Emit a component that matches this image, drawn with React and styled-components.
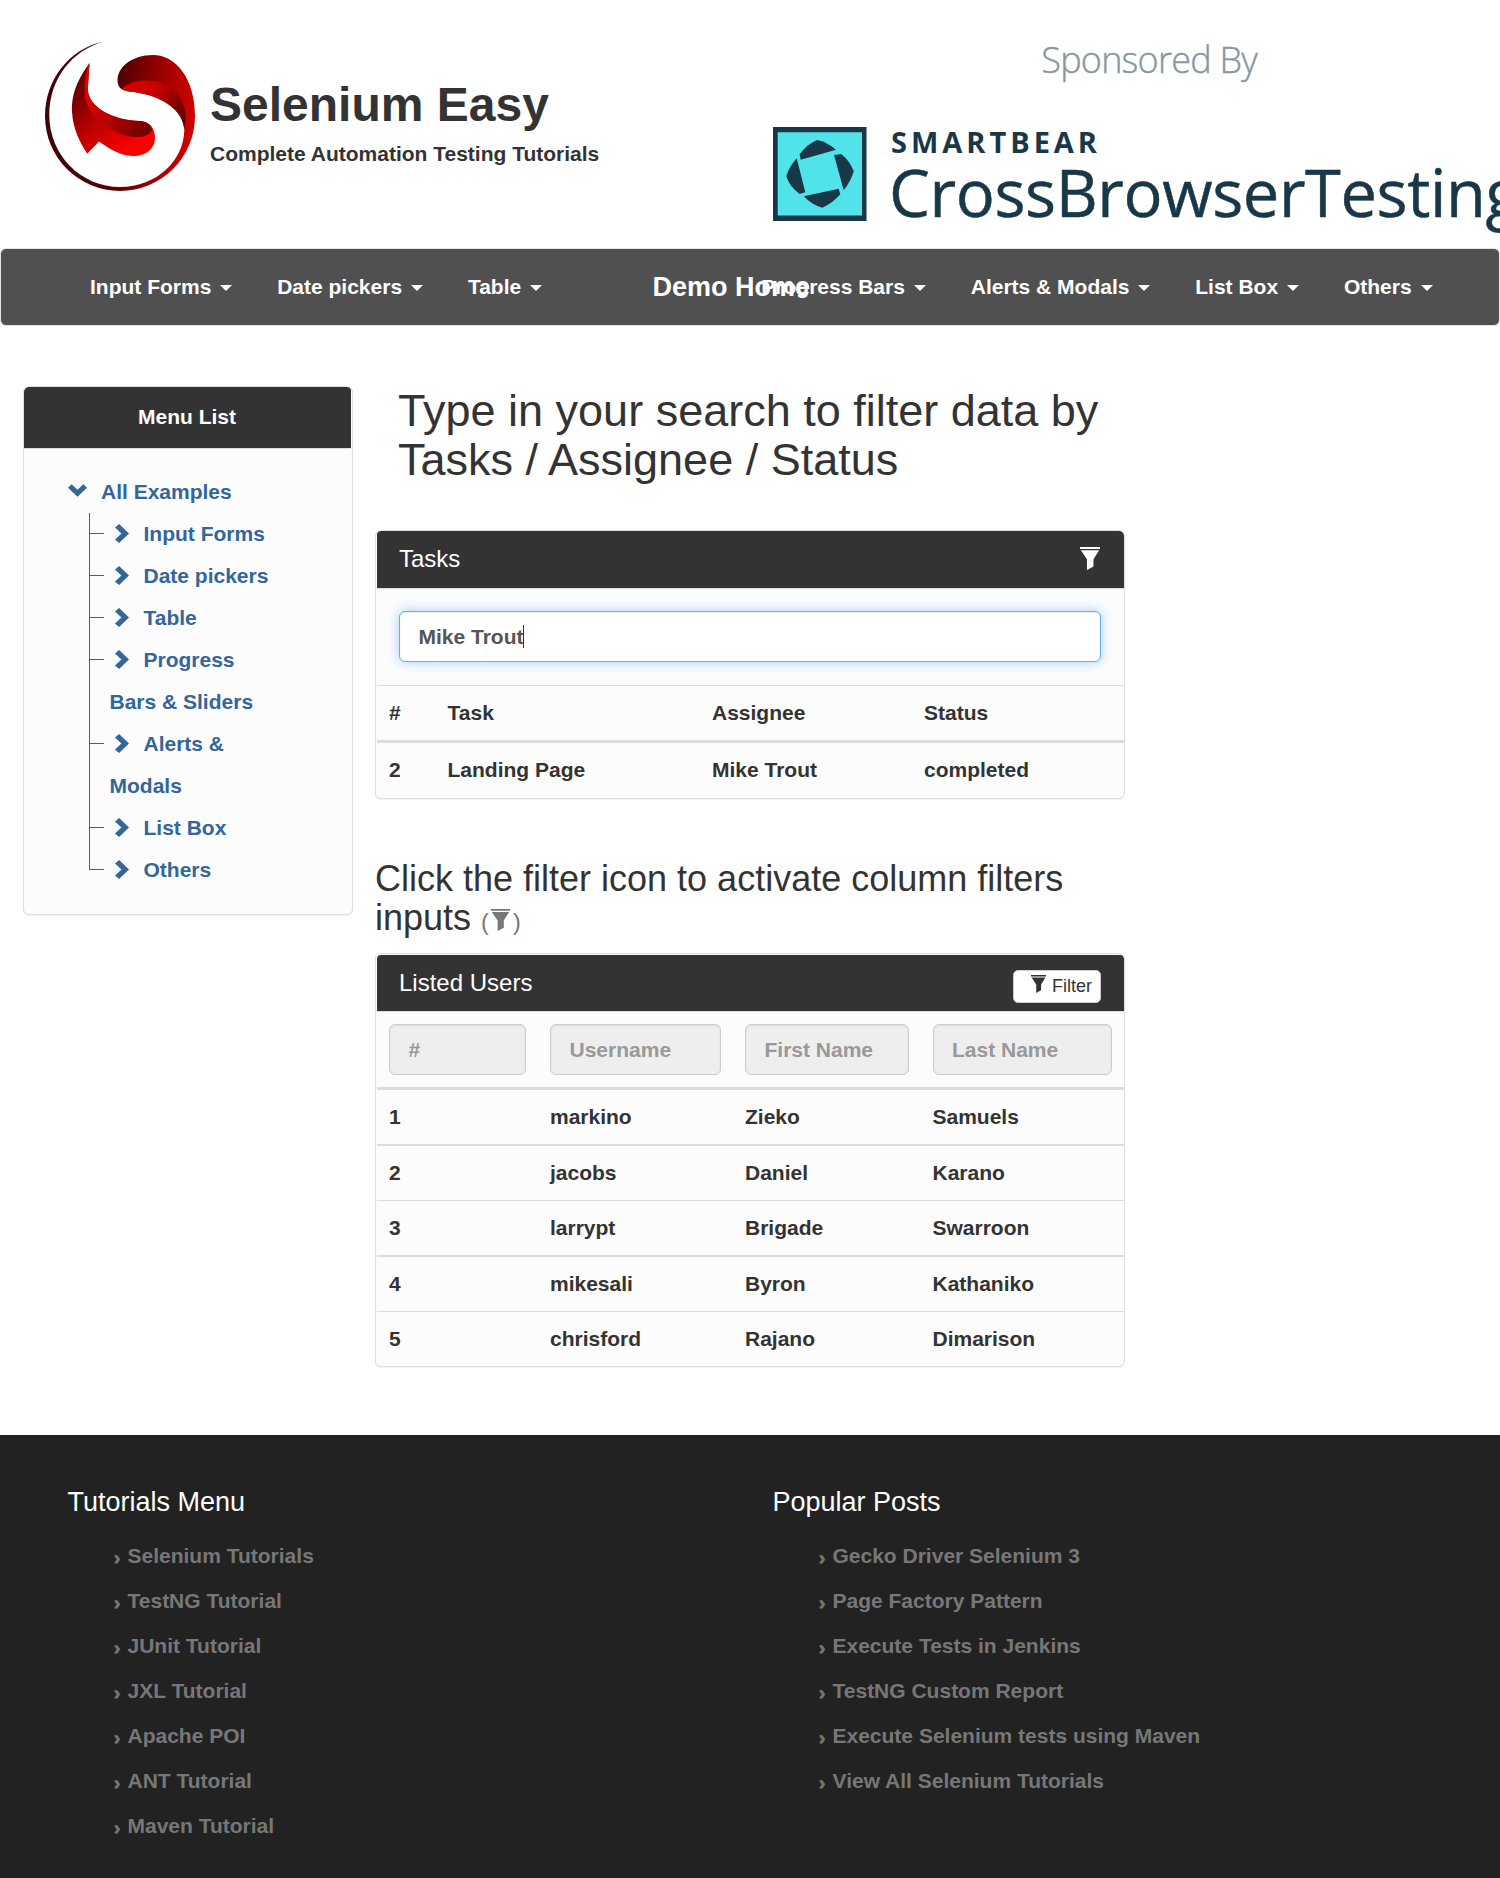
import React from "react";
import styled, { createGlobalStyle } from "styled-components";

const GlobalStyle = createGlobalStyle`
  *, *::before, *::after { box-sizing: border-box; }
  html { background: #fff; }
  body {
    margin: 0;
    overflow-x: hidden;
    background: #fff;
    color: #333;
    font: bold 21px/30px "Liberation Sans", Arial, Helvetica, sans-serif;
  }
  h1, h2, h3, p, ul { margin: 0; padding: 0; }
  ul { list-style: none; }
  a { color: inherit; text-decoration: none; }
`;

const Page = styled.div`
  width: 1500px;
  height: 1878px;
  overflow: hidden;
  display: flex;
  flex-direction: column;
`;

/* ---------- header ---------- */

const Header = styled.header`
  display: flex;
  flex: none;
  height: 248px;
`;

const Brand = styled.a`
  display: flex;
  align-items: flex-start;
  width: 773px;
  padding: 41px 0 0 45px;
`;

const BrandText = styled.div`
  padding: 37px 0 0 15px;
`;

const BrandName = styled.h1`
  font-size: 48px;
  line-height: 53px;
`;

const Tagline = styled.p`
  margin-top: 8px;
`;

const LogoSvg = styled.svg`
  display: block;
  flex: none;
  width: 150px;
  height: 150px;
`;

const SponsorSvg = styled.svg`
  display: block;
  flex: none;
  width: 727px;
  height: 248px;
  font-family: "Open Sans", "Noto Sans", sans-serif;
`;

function Logo() {
  return (
    <LogoSvg viewBox="0 0 150 150">
      <defs>
        <linearGradient id="ring" gradientUnits="userSpaceOnUse" x1="0" y1="60" x2="150" y2="75">
          <stop offset="0" stopColor="#3c080a" />
          <stop offset=".5" stopColor="#570003" />
          <stop offset=".85" stopColor="#b40000" />
          <stop offset="1" stopColor="#d20000" />
        </linearGradient>
        <linearGradient id="upperFold" gradientUnits="userSpaceOnUse" x1="85" y1="40" x2="142" y2="72">
          <stop offset="0" stopColor="#d80000" />
          <stop offset=".45" stopColor="#c40000" />
          <stop offset="1" stopColor="#5c0000" />
        </linearGradient>
        <linearGradient id="wing" gradientUnits="userSpaceOnUse" x1="30" y1="50" x2="84" y2="108">
          <stop offset="0" stopColor="#6a0000" />
          <stop offset=".5" stopColor="#c00000" />
          <stop offset="1" stopColor="#fa0000" />
        </linearGradient>
        <linearGradient id="lowerFold" gradientUnits="userSpaceOnUse" x1="42" y1="60" x2="106" y2="90">
          <stop offset="0" stopColor="#e00000" />
          <stop offset=".4" stopColor="#b40000" />
          <stop offset="1" stopColor="#680000" />
        </linearGradient>
      </defs>
      <path
        fill="url(#ring)"
        d="M59 .4C25 7 0 38 0 75a75 75 0 0 0 150 0C150 38 131 14 108 14C86 14 72.5 27 72.5 39C72.5 46 76 49.5 84 50.5C112 53 139 66 139.3 89C139 119 112 146 75 146C36 146 4.3 114 4.3 74C4.3 38 27 9 59 .4Z"
      />
      <path
        fill="url(#upperFold)"
        d="M77 47.5C88 38 106 38 117 42C136 49 144 68 139.2 88C137 66 112 53 84 50.5C81 50 79 49 77 47.5Z"
      />
      <path
        fill="url(#wing)"
        d="M44.5 22C30 42 26.5 56 27 71C28 88 35 102 42.3 112.7L54 100.5C62 106 74 115 88 115C102 115 110 107 110 97C110 86 104 80.5 95 80C70 80 40 66 43 45Z"
      />
      <path
        fill="url(#lowerFold)"
        d="M44.5 22C38 36 38 56 44 68C54 84 72 95 90 96C98 96.5 105 94 107 89C105 83 101 80.3 95 80C70 80 40 66 43 45Z"
      />
    </LogoSvg>
  );
}

function Sponsor() {
  return (
    <SponsorSvg viewBox="773 0 727 248">
      <text x="1041.3" y="73" fontSize="36" fontWeight="300" fill="#8896a3" stroke="#8896a3" strokeWidth=".4" textLength="216.4">
        Sponsored By
      </text>
      <path fill="#183747" d="M773 127H866.5V221H773Z" />
      <path fill="#50e3e9" d="M777.7 132.3H862V215.5H777.7Z" />
      <g fill="#183747">
        <path d="M799.7 154.3Q807 144 817.3 140Q827 142 836 149.7L800.7 159.7Z" />
        <path d="M834 155L841.3 154Q850 161 853.7 171.3Q851 181 843.7 190.3Z" />
        <path d="M803.7 196.3L838.7 188.7L840.3 194.3Q833 203 822.3 207.7Q812 205 803.7 196.3Z" />
        <path d="M796.7 158.3L805.3 192.3L799.7 194Q789 186 786.3 176Q789 167 796.7 158.3Z" />
      </g>
      <text x="891" y="153.3" fontSize="29" fontWeight="700" fill="#183747" textLength="206">
        SMARTBEAR
      </text>
      <text x="889" y="216.7" fontSize="65" fontWeight="400" fill="#183747" stroke="#183747" strokeWidth=".5" letterSpacing="-.38">
        CrossBrowserTesting
      </text>
    </SponsorSvg>
  );
}

/* ---------- navigation ---------- */

const Navbar = styled.nav`
  position: relative;
  flex: none;
  display: flex;
  align-items: center;
  justify-content: space-between;
  height: 78px;
  padding: 0 44px 1px 66.5px;
  border: 1px solid #e4e4e4;
  border-radius: 6px;
  background: #505050;
  color: #fff;
`;

const NavGroup = styled.div`
  display: flex;
`;

const NavLink = styled.a`
  padding: 0 22.5px;
  white-space: nowrap;
`;

const Caret = styled.b`
  display: inline-block;
  margin-left: 3px;
  vertical-align: middle;
  border-top: 6px solid;
  border-left: 6px solid transparent;
  border-right: 6px solid transparent;
`;

const NavBrand = styled.a`
  position: absolute;
  left: 651.5px;
  top: 23px;
  font-size: 27px;
  white-space: nowrap;
`;

const leftNav = ["Input Forms", "Date pickers", "Table"];
const rightNav = ["Progress Bars", "Alerts & Modals", "List Box", "Others"];

const renderNav = (labels) =>
  labels.map((label) => (
    <NavLink key={label}>
      {label} <Caret />
    </NavLink>
  ));

/* ---------- shared panel parts ---------- */

const Panel = styled.section`
  padding: ${(p) => p.$inset || 0}px 0 0 1px;
  border: 1px solid #ddd;
  border-radius: 6px;
  background: #fcfcfc;
  box-shadow: 0 1px 1px rgba(0, 0, 0, 0.05);
  overflow: hidden;
`;

const PanelHeader = styled.div`
  display: flex;
  align-items: center;
  justify-content: ${(p) => (p.$center ? "center" : "space-between")};
  height: ${(p) => p.$height}px;
  padding: 0 23px 2px 22px;
  background: #333;
  border-bottom: ${(p) => (p.$line ? "1px solid #ddd" : "0")};
  border-radius: 4px 4px 0 0;
  color: #fff;
`;

const PanelTitle = styled.h3`
  font-size: 24px;
  font-weight: 400;
  line-height: 27px;
`;

const Funnel = styled.svg`
  width: ${(p) => p.$w}px;
  height: ${(p) => p.$h}px;
  fill: currentColor;
`;

function FilterIcon({ w, h, className }) {
  return (
    <Funnel $w={w} $h={h} className={className} viewBox="0 0 46 53" preserveAspectRatio="none">
      <path d="M0 0H46V4.5H0ZM2 7.5H44L31 28V45L16 53V28Z" />
    </Funnel>
  );
}

const TitleFilterIcon = styled(FilterIcon)`
  margin-right: 1px;
`;

/* ---------- body ---------- */

const Body = styled.div`
  display: flex;
  flex: none;
  align-items: flex-start;
  gap: 22px;
  height: 1109px;
  padding: 60px 0 0 23px;
`;

const Sidebar = styled(Panel)`
  width: 330px;
  height: 529px;
  padding: 0 1px 0 0;
`;

const Tree = styled.div`
  padding: 22px 0 0 44px;
  color: #336699;
  line-height: 42px;
`;

const TreeRoot = styled.a`
  display: flex;
  align-items: center;
  gap: 14px;

  svg { margin-bottom: 4px; }
`;

const TreeList = styled.ul`
  padding-left: 21px;
`;

const TreeNode = styled.li`
  display: flex;
`;

const Connector = styled.span`
  display: flex;
  flex-direction: column;
  width: 15px;
  margin-right: 5.5px;

  &::before {
    content: "";
    height: 21px;
    border: solid #336699;
    border-width: 0 0 1px 1px;
  }

  &::after {
    content: "";
    flex: 1;
    border-left: ${(p) => (p.$last ? 0 : 1)}px solid #336699;
  }
`;

const NodeLabel = styled.a`
  width: 166px;
`;

const ChevronSvg = styled.svg`
  fill: currentColor;
`;

const NodeChevron = styled(ChevronSvg)`
  margin: 0 15px 0 5px;
  vertical-align: -2px;
`;

const treeItems = [
  "Input Forms",
  "Date pickers",
  "Table",
  "Progress Bars & Sliders",
  "Alerts & Modals",
  "List Box",
  "Others",
];

const Main = styled.main`
  width: 750px;
`;

const SearchHeading = styled.h2`
  margin-bottom: 46px;
  padding-left: 23px;
  font-size: 45px;
  font-weight: 400;
  line-height: 49px;
`;

const FilterHeading = styled.h2`
  margin: 60px 0 16px;
  font-size: 36px;
  font-weight: 400;
  line-height: 39px;

  small {
    color: #777;
    font-size: 23.4px;
    line-height: 1;
  }
`;

const HeadingFilterIcon = styled(FilterIcon)`
  margin: 0 2.5px;
  vertical-align: -1px;
`;

const SearchArea = styled.div`
  padding: 22px 23px 23px 22px;
`;

const Field = styled.div`
  height: 51px;
  padding: 9px 18.5px;
  border: 1px solid ${(p) => (p.$active ? "#66afe9" : "#ccc")};
  border-radius: 6px;
  background: ${(p) => (p.$active ? "#fff" : "#eee")};
  color: ${(p) => (p.$active ? "#555" : "#999")};
  line-height: 32px;
  white-space: nowrap;
  box-shadow: inset 0 1px 2px rgba(0, 0, 0, 0.075)
    ${(p) => (p.$active ? ", 0 0 12px rgba(102, 175, 233, 0.6)" : "")};
`;

const TextCursor = styled.span`
  display: inline-block;
  width: 1px;
  height: 23px;
  margin-left: -1px;
  vertical-align: -4px;
  background: #333;
`;

const Row = styled.div`
  display: grid;
  grid-template-columns: ${(p) => p.$columns};
  align-items: center;
  height: ${(p) => p.$height}px;
  border-top: ${(p) => p.$line}px solid #ddd;
`;

const Cell = styled.div`
  padding: 0 12px;
`;

const FilterButton = styled.button`
  display: flex;
  align-items: flex-start;
  gap: 6px;
  width: 88px;
  height: 33px;
  margin-top: 8px;
  padding: 4px 0 0 17px;
  border: 1px solid #ccc;
  border-radius: 5px;
  background: #fff;
  color: #333;
  font: 400 18px/23px "Liberation Sans", Arial, sans-serif;
`;

const taskColumns = "58.5px 264.5px 212px 1fr";
const userColumns = "161px 195px 187.5px 1fr";

const users = [
  ["1", "markino", "Zieko", "Samuels"],
  ["2", "jacobs", "Daniel", "Karano"],
  ["3", "larrypt", "Brigade", "Swarroon"],
  ["4", "mikesali", "Byron", "Kathaniko"],
  ["5", "chrisford", "Rajano", "Dimarison"],
];

function TableRow({ cells, ...rowProps }) {
  return (
    <Row {...rowProps}>
      {cells.map((cell) => (
        <Cell key={cell}>{cell}</Cell>
      ))}
    </Row>
  );
}

const TasksPanel = styled(Panel)`
  padding-bottom: 1px;
`;

/* ---------- footer ---------- */

const Footer = styled.footer`
  display: grid;
  grid-template-columns: 705px 1fr;
  flex: 1;
  padding: 52px 0 0 67.5px;
  background: #222;
`;

const FooterTitle = styled.h3`
  margin-bottom: 16px;
  color: #fff;
  font-size: 27px;
  font-weight: 400;
  line-height: 30px;
`;

const FooterList = styled.ul`
  padding-left: 46.5px;
  color: #777;
  line-height: 45px;
`;

const FooterItem = styled.li`
  display: flex;
  height: 45px;
`;

const Bullet = styled.span`
  width: 13.5px;
  padding-top: 2px;
  color: #77776a;
  font-size: 19px;
  -webkit-text-stroke: 0.8px #77776a;
`;

const footerColumns = [
  {
    title: "Tutorials Menu",
    links: [
      "Selenium Tutorials",
      "TestNG Tutorial",
      "JUnit Tutorial",
      "JXL Tutorial",
      "Apache POI",
      "ANT Tutorial",
      "Maven Tutorial",
    ],
  },
  {
    title: "Popular Posts",
    links: [
      "Gecko Driver Selenium 3",
      "Page Factory Pattern",
      "Execute Tests in Jenkins",
      "TestNG Custom Report",
      "Execute Selenium tests using Maven",
      "View All Selenium Tutorials",
    ],
  },
];

export default function App() {
  return (
    <Page>
      <GlobalStyle />
      <Header>
        <Brand>
          <Logo />
          <BrandText>
            <BrandName>Selenium Easy</BrandName>
            <Tagline>Complete Automation Testing Tutorials</Tagline>
          </BrandText>
        </Brand>
        <Sponsor />
      </Header>

      <Navbar>
        <NavGroup>{renderNav(leftNav)}</NavGroup>
        <NavBrand>Demo Home</NavBrand>
        <NavGroup>{renderNav(rightNav)}</NavGroup>
      </Navbar>

      <Body>
        <Sidebar>
          <PanelHeader $height={62} $center $line>
            Menu List
          </PanelHeader>
          <Tree>
            <TreeRoot>
              <ChevronSvg width="19" height="13" viewBox="0 0 18.7 12.5">
                <path d="M0 3.6L3.6 0L9.35 5.5L15.1 0L18.7 3.6L9.35 12.5Z" />
              </ChevronSvg>
              All Examples
            </TreeRoot>
            <TreeList>
              {treeItems.map((item, i) => (
                <TreeNode key={item}>
                  <Connector $last={i === treeItems.length - 1} />
                  <NodeLabel>
                    <NodeChevron width="14" height="19" viewBox="0 0 13 19" preserveAspectRatio="none">
                      <path d="M0 3.5L3.8 0L13 9.5L3.8 19L0 15.5L6 9.5Z" />
                    </NodeChevron>
                    {item}
                  </NodeLabel>
                </TreeNode>
              ))}
            </TreeList>
          </Tree>
        </Sidebar>

        <Main>
          <SearchHeading>Type in your search to filter data by Tasks / Assignee / Status</SearchHeading>
          <TasksPanel>
            <PanelHeader $height={58} $line>
              <PanelTitle>Tasks</PanelTitle>
              <TitleFilterIcon w={20} h={23} />
            </PanelHeader>
            <SearchArea>
              <Field $active>
                Mike Trout
                <TextCursor />
              </Field>
            </SearchArea>
            <TableRow $columns={taskColumns} $height={55} $line={1} cells={["#", "Task", "Assignee", "Status"]} />
            <TableRow $columns={taskColumns} $height={57} $line={3} cells={["2", "Landing Page", "Mike Trout", "completed"]} />
          </TasksPanel>

          <FilterHeading>
            Click the filter icon to activate column filters inputs{" "}
            <small>
              (<HeadingFilterIcon w={19} h={22} />)
            </small>
          </FilterHeading>

          <Panel $inset={1}>
            <PanelHeader $height={56}>
              <PanelTitle>Listed Users</PanelTitle>
              <FilterButton>
                <FilterIcon w={15} h={18} />
                Filter
              </FilterButton>
            </PanelHeader>
            <Row $columns={userColumns} $height={76} $line={1}>
              {["#", "Username", "First Name", "Last Name"].map((label) => (
                <Cell key={label}>
                  <Field>{label}</Field>
                </Cell>
              ))}
            </Row>
            {users.map((user, i) => {
              const line = i === 0 ? 3 : i % 2 ? 2 : 1;
              return <TableRow key={user[0]} $columns={userColumns} $height={54 + line} $line={line} cells={user} />;
            })}
          </Panel>
        </Main>
      </Body>

      <Footer>
        {footerColumns.map((column) => (
          <div key={column.title}>
            <FooterTitle>{column.title}</FooterTitle>
            <FooterList>
              {column.links.map((link) => (
                <FooterItem key={link}>
                  <Bullet>›</Bullet>
                  <a>{link}</a>
                </FooterItem>
              ))}
            </FooterList>
          </div>
        ))}
      </Footer>
    </Page>
  );
}
